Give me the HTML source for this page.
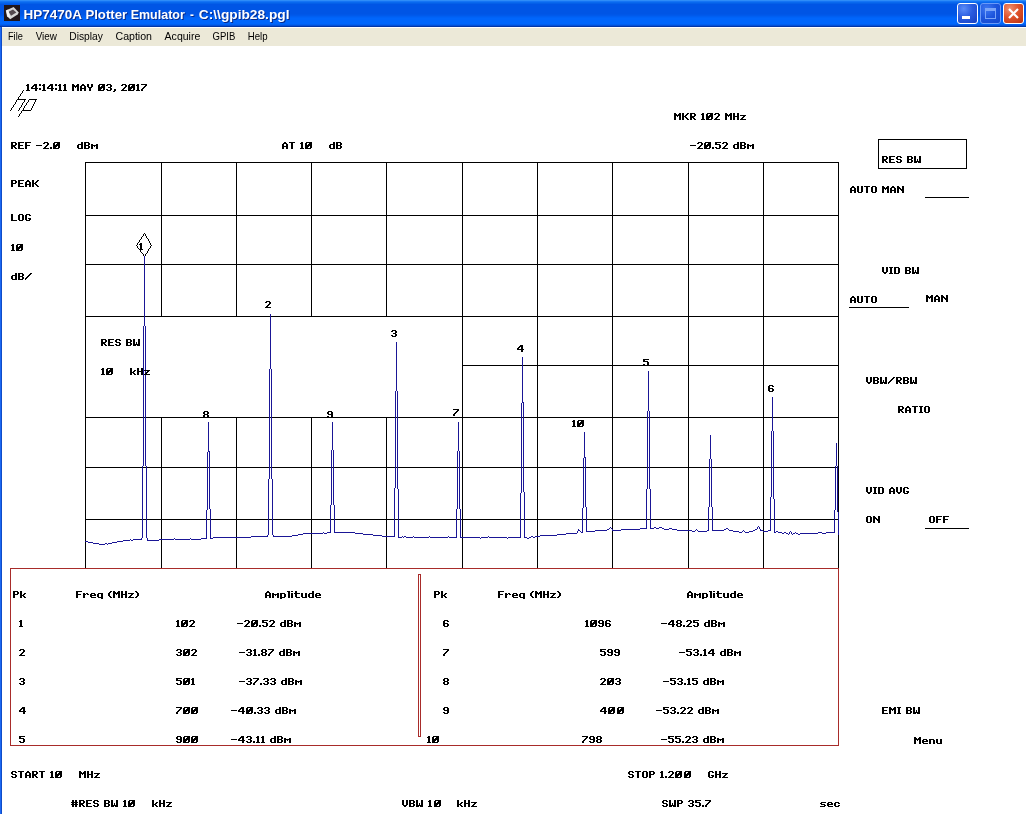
<!DOCTYPE html>
<html><head><meta charset="utf-8"><title>HP7470A Plotter Emulator</title>
<style>
html,body{margin:0;padding:0;background:#fff;overflow:hidden}
body{width:1026px;height:814px;position:relative;font-family:"Liberation Sans",sans-serif}
#tb{position:absolute;left:0;top:0;width:1026px;height:27px;
background:linear-gradient(to bottom,#2e8cf8 0.5px,#1474f4 1.5px,#0868ee 2.5px,#045fe8 3.5px,#0055e5 4.5px,#0055e5 13.5px,#0057e8 14.5px,#005aec 15.5px,#005ff2 16.5px,#0063f8 17.5px,#0066fc 18.5px,#0066fc 23.5px,#0060f0 24.5px,#0450d8 25.5px,#0238a8 26.5px)}
#lb{position:absolute;left:0;top:27px;width:2px;height:787px;background:linear-gradient(to right,#1c68f2 0,#1c68f2 1px,#0f4cc8 1px,#0f4cc8 2px)}
#mb{position:absolute;left:2px;top:27px;width:1024px;height:19px;background:#ece9d8;border-top:1px solid #fff;box-sizing:border-box}
#ttl{position:absolute;left:0;top:0}
.btn{position:absolute;top:3px;width:21px;height:21px;box-sizing:border-box;border:1px solid #fff;border-radius:3px}
</style></head><body>
<div id="tb"></div><div id="lb"></div><div id="mb"></div>
<div class="btn" style="left:957px;background:radial-gradient(circle at 30% 25%,#5a8cf8 0,#2a5ce0 45%,#1840c0 100%)"></div>
<div class="btn" style="left:980px;border-color:#6a9af8;background:radial-gradient(circle at 30% 25%,#3e78f2 0,#1c54dc 50%,#1448cc 100%)"></div>
<div class="btn" style="left:1003px;background:radial-gradient(circle at 30% 25%,#f09070 0,#e0542c 45%,#b83010 100%)"></div>
<svg width="1026" height="48" viewBox="0 0 1026 48" style="position:absolute;left:0;top:0;will-change:transform">
<style>
.tt{font-family:"Liberation Sans",sans-serif;font-weight:bold;font-size:13.5px;fill:#fff}
.ts{font-family:"Liberation Sans",sans-serif;font-weight:bold;font-size:13.5px;fill:#0a2a88}
.mn{font-family:"Liberation Sans",sans-serif;font-size:11px;fill:#000}
</style>
<!-- app icon -->
<rect x="4" y="5" width="16" height="16" fill="#21161a"/>
<path d="M13.6,7 L18.8,12.4 L17.6,14.6 L10.2,19.2 L7,16.2 L5.8,10.4 Z" fill="#d6d6d6"/>
<path d="M13,9.4 L16.4,12.6 L11,15.8 L8.6,11.8 Z" fill="#54494e"/>
<path d="M6.2,10.6 L8.2,9.6 L9.6,15.6 L10.4,18.6 L7.4,16 Z" fill="#f4f4f4"/>
<text class="ts" x="24.4" y="19.7" textLength="58.5" lengthAdjust="spacingAndGlyphs">HP7470A</text>
<text class="tt" x="23.4" y="18.7" textLength="58.5" lengthAdjust="spacingAndGlyphs">HP7470A</text>
<text class="ts" x="86.4" y="19.7" textLength="41.8" lengthAdjust="spacingAndGlyphs">Plotter</text>
<text class="tt" x="85.4" y="18.7" textLength="41.8" lengthAdjust="spacingAndGlyphs">Plotter</text>
<text class="ts" x="131.7" y="19.7" textLength="54.1" lengthAdjust="spacingAndGlyphs">Emulator</text>
<text class="tt" x="130.7" y="18.7" textLength="54.1" lengthAdjust="spacingAndGlyphs">Emulator</text>
<text class="ts" x="191.0" y="19.7" textLength="3.9" lengthAdjust="spacingAndGlyphs">-</text>
<text class="tt" x="190.0" y="18.7" textLength="3.9" lengthAdjust="spacingAndGlyphs">-</text>
<text class="ts" x="199.8" y="19.7" textLength="90.7" lengthAdjust="spacingAndGlyphs">C:\\gpib28.pgl</text>
<text class="tt" x="198.8" y="18.7" textLength="90.7" lengthAdjust="spacingAndGlyphs">C:\\gpib28.pgl</text>
<text class="mn" x="8.0" y="40" textLength="14.8" lengthAdjust="spacingAndGlyphs">File</text>
<text class="mn" x="35.7" y="40" textLength="21.3" lengthAdjust="spacingAndGlyphs">View</text>
<text class="mn" x="69.3" y="40" textLength="33.6" lengthAdjust="spacingAndGlyphs">Display</text>
<text class="mn" x="115.5" y="40" textLength="36.5" lengthAdjust="spacingAndGlyphs">Caption</text>
<text class="mn" x="164.6" y="40" textLength="35.7" lengthAdjust="spacingAndGlyphs">Acquire</text>
<text class="mn" x="212.6" y="40" textLength="22.8" lengthAdjust="spacingAndGlyphs">GPIB</text>
<text class="mn" x="247.7" y="40" textLength="19.8" lengthAdjust="spacingAndGlyphs">Help</text>
<!-- window button glyphs -->
<rect x="962" y="16" width="8" height="3" fill="#fff"/>
<rect x="985.5" y="8.5" width="10" height="10" fill="none" stroke="#7aa4f8" stroke-width="1"/>
<rect x="985" y="8" width="11" height="3" fill="#7aa4f8"/>
<path d="M1009,9 L1018,18 M1018,9 L1009,18" stroke="#fff" stroke-width="2.2" fill="none"/>
</svg>
<svg id="plot" width="1026" height="814" viewBox="0 0 1026 814" style="position:absolute;left:0;top:0">
<style>
.k{fill:#000}
.r{fill:#a82c2a}
.tb{fill:#1a1696}
.ln{fill:none;stroke:#000;stroke-width:1}
#plot text{font-family:"Liberation Sans",sans-serif;font-weight:bold;font-size:10px;fill:#000}
</style>
<defs>
<path id="g23" d="M1 0h2v1h-2zM4 0h2v1h-2zM1 1h2v1h-2zM4 1h2v1h-2zM0 2h7v1h-7zM1 3h2v1h-2zM4 3h2v1h-2zM0 4h7v1h-7zM1 5h2v1h-2zM4 5h2v1h-2zM1 6h2v1h-2zM4 6h2v1h-2z"/>
<path id="g28" d="M2 0h2v1h-2zM1 1h2v1h-2zM0 2h2v1h-2zM0 3h2v1h-2zM0 4h2v1h-2zM1 5h2v1h-2zM2 6h2v1h-2z"/>
<path id="g29" d="M0 0h2v1h-2zM1 1h2v1h-2zM2 2h2v1h-2zM2 3h2v1h-2zM2 4h2v1h-2zM1 5h2v1h-2zM0 6h2v1h-2z"/>
<path id="g2c" d="M1 5h2v1h-2zM1 6h2v1h-2zM0 7h2v1h-2z"/>
<path id="g2e" d="M0 5h2v1h-2zM0 6h2v1h-2z"/>
<path id="g2f" d="M5 0h2v1h-2zM4 1h2v1h-2zM3 2h2v1h-2zM2 3h2v1h-2zM1 4h2v1h-2zM0 5h2v1h-2zM0 6h1v1h-1z"/>
<path id="g30" d="M1 0h6v1h-6zM0 1h2v1h-2zM4 1h3v1h-3zM0 2h2v1h-2zM3 2h4v1h-4zM0 3h7v1h-7zM0 4h4v1h-4zM5 4h2v1h-2zM0 5h3v1h-3zM5 5h2v1h-2zM0 6h6v1h-6z"/>
<path id="g31" d="M1 0h2v1h-2zM0 1h3v1h-3zM1 2h2v1h-2zM1 3h2v1h-2zM1 4h2v1h-2zM1 5h2v1h-2zM0 6h4v1h-4z"/>
<path id="g32" d="M1 0h4v1h-4zM0 1h2v1h-2zM4 1h2v1h-2zM4 2h2v1h-2zM3 3h2v1h-2zM2 4h2v1h-2zM1 5h2v1h-2zM0 6h6v1h-6z"/>
<path id="g33" d="M1 0h4v1h-4zM0 1h2v1h-2zM4 1h2v1h-2zM4 2h2v1h-2zM2 3h3v1h-3zM4 4h2v1h-2zM0 5h2v1h-2zM4 5h2v1h-2zM1 6h4v1h-4z"/>
<path id="g34" d="M3 0h3v1h-3zM2 1h4v1h-4zM1 2h2v1h-2zM4 2h2v1h-2zM0 3h2v1h-2zM4 3h2v1h-2zM0 4h7v1h-7zM4 5h2v1h-2zM4 6h2v1h-2z"/>
<path id="g35" d="M0 0h6v1h-6zM0 1h2v1h-2zM0 2h5v1h-5zM4 3h2v1h-2zM4 4h2v1h-2zM0 5h2v1h-2zM4 5h2v1h-2zM1 6h4v1h-4z"/>
<path id="g36" d="M1 0h4v1h-4zM0 1h2v1h-2zM4 1h2v1h-2zM0 2h2v1h-2zM0 3h5v1h-5zM0 4h2v1h-2zM4 4h2v1h-2zM0 5h2v1h-2zM4 5h2v1h-2zM1 6h4v1h-4z"/>
<path id="g37" d="M0 0h6v1h-6zM4 1h2v1h-2zM3 2h2v1h-2zM2 3h2v1h-2zM1 4h2v1h-2zM0 5h2v1h-2zM0 6h2v1h-2z"/>
<path id="g38" d="M1 0h4v1h-4zM0 1h2v1h-2zM4 1h2v1h-2zM0 2h2v1h-2zM4 2h2v1h-2zM1 3h4v1h-4zM0 4h2v1h-2zM4 4h2v1h-2zM0 5h2v1h-2zM4 5h2v1h-2zM1 6h4v1h-4z"/>
<path id="g39" d="M1 0h4v1h-4zM0 1h2v1h-2zM4 1h2v1h-2zM0 2h2v1h-2zM4 2h2v1h-2zM1 3h5v1h-5zM4 4h2v1h-2zM0 5h2v1h-2zM4 5h2v1h-2zM1 6h4v1h-4z"/>
<path id="g3a" d="M0 0h2v1h-2zM0 1h2v1h-2zM0 4h2v1h-2zM0 5h2v1h-2z"/>
<path id="g41" d="M2 0h2v1h-2zM1 1h4v1h-4zM0 2h2v1h-2zM4 2h2v1h-2zM0 3h2v1h-2zM4 3h2v1h-2zM0 4h6v1h-6zM0 5h2v1h-2zM4 5h2v1h-2zM0 6h2v1h-2zM4 6h2v1h-2z"/>
<path id="g42" d="M0 0h5v1h-5zM0 1h2v1h-2zM4 1h2v1h-2zM0 2h2v1h-2zM4 2h2v1h-2zM0 3h5v1h-5zM0 4h2v1h-2zM4 4h2v1h-2zM0 5h2v1h-2zM4 5h2v1h-2zM0 6h5v1h-5z"/>
<path id="g44" d="M0 0h5v1h-5zM0 1h2v1h-2zM4 1h2v1h-2zM0 2h2v1h-2zM4 2h2v1h-2zM0 3h2v1h-2zM4 3h2v1h-2zM0 4h2v1h-2zM4 4h2v1h-2zM0 5h2v1h-2zM4 5h2v1h-2zM0 6h5v1h-5z"/>
<path id="g45" d="M0 0h6v1h-6zM0 1h2v1h-2zM0 2h2v1h-2zM0 3h5v1h-5zM0 4h2v1h-2zM0 5h2v1h-2zM0 6h6v1h-6z"/>
<path id="g46" d="M0 0h6v1h-6zM0 1h2v1h-2zM0 2h2v1h-2zM0 3h5v1h-5zM0 4h2v1h-2zM0 5h2v1h-2zM0 6h2v1h-2z"/>
<path id="g47" d="M1 0h4v1h-4zM0 1h2v1h-2zM4 1h2v1h-2zM0 2h2v1h-2zM0 3h2v1h-2zM0 4h2v1h-2zM3 4h3v1h-3zM0 5h2v1h-2zM4 5h2v1h-2zM1 6h4v1h-4z"/>
<path id="g48" d="M0 0h2v1h-2zM4 0h2v1h-2zM0 1h2v1h-2zM4 1h2v1h-2zM0 2h2v1h-2zM4 2h2v1h-2zM0 3h6v1h-6zM0 4h2v1h-2zM4 4h2v1h-2zM0 5h2v1h-2zM4 5h2v1h-2zM0 6h2v1h-2zM4 6h2v1h-2z"/>
<path id="g49" d="M0 0h4v1h-4zM1 1h2v1h-2zM1 2h2v1h-2zM1 3h2v1h-2zM1 4h2v1h-2zM1 5h2v1h-2zM0 6h4v1h-4z"/>
<path id="g4b" d="M0 0h2v1h-2zM5 0h2v1h-2zM0 1h2v1h-2zM4 1h2v1h-2zM0 2h2v1h-2zM3 2h2v1h-2zM0 3h4v1h-4zM0 4h2v1h-2zM3 4h2v1h-2zM0 5h2v1h-2zM4 5h2v1h-2zM0 6h2v1h-2zM5 6h2v1h-2z"/>
<path id="g4c" d="M0 0h2v1h-2zM0 1h2v1h-2zM0 2h2v1h-2zM0 3h2v1h-2zM0 4h2v1h-2zM0 5h2v1h-2zM0 6h6v1h-6z"/>
<path id="g4d" d="M0 0h2v1h-2zM5 0h2v1h-2zM0 1h3v1h-3zM4 1h3v1h-3zM0 2h7v1h-7zM0 3h2v1h-2zM3 3h1v1h-1zM5 3h2v1h-2zM0 4h2v1h-2zM5 4h2v1h-2zM0 5h2v1h-2zM5 5h2v1h-2zM0 6h2v1h-2zM5 6h2v1h-2z"/>
<path id="g4e" d="M0 0h2v1h-2zM5 0h2v1h-2zM0 1h3v1h-3zM5 1h2v1h-2zM0 2h4v1h-4zM5 2h2v1h-2zM0 3h2v1h-2zM3 3h4v1h-4zM0 4h2v1h-2zM4 4h3v1h-3zM0 5h2v1h-2zM5 5h2v1h-2zM0 6h2v1h-2zM5 6h2v1h-2z"/>
<path id="g4f" d="M1 0h4v1h-4zM0 1h2v1h-2zM4 1h2v1h-2zM0 2h2v1h-2zM4 2h2v1h-2zM0 3h2v1h-2zM4 3h2v1h-2zM0 4h2v1h-2zM4 4h2v1h-2zM0 5h2v1h-2zM4 5h2v1h-2zM1 6h4v1h-4z"/>
<path id="g50" d="M0 0h5v1h-5zM0 1h2v1h-2zM4 1h2v1h-2zM0 2h2v1h-2zM4 2h2v1h-2zM0 3h5v1h-5zM0 4h2v1h-2zM0 5h2v1h-2zM0 6h2v1h-2z"/>
<path id="g52" d="M0 0h5v1h-5zM0 1h2v1h-2zM4 1h2v1h-2zM0 2h2v1h-2zM4 2h2v1h-2zM0 3h5v1h-5zM0 4h4v1h-4zM0 5h2v1h-2zM3 5h2v1h-2zM0 6h2v1h-2zM4 6h2v1h-2z"/>
<path id="g53" d="M1 0h4v1h-4zM0 1h2v1h-2zM4 1h2v1h-2zM0 2h2v1h-2zM1 3h4v1h-4zM4 4h2v1h-2zM0 5h2v1h-2zM4 5h2v1h-2zM1 6h4v1h-4z"/>
<path id="g54" d="M0 0h6v1h-6zM2 1h2v1h-2zM2 2h2v1h-2zM2 3h2v1h-2zM2 4h2v1h-2zM2 5h2v1h-2zM2 6h2v1h-2z"/>
<path id="g55" d="M0 0h2v1h-2zM4 0h2v1h-2zM0 1h2v1h-2zM4 1h2v1h-2zM0 2h2v1h-2zM4 2h2v1h-2zM0 3h2v1h-2zM4 3h2v1h-2zM0 4h2v1h-2zM4 4h2v1h-2zM0 5h2v1h-2zM4 5h2v1h-2zM1 6h4v1h-4z"/>
<path id="g56" d="M0 0h2v1h-2zM4 0h2v1h-2zM0 1h2v1h-2zM4 1h2v1h-2zM0 2h2v1h-2zM4 2h2v1h-2zM0 3h2v1h-2zM4 3h2v1h-2zM0 4h2v1h-2zM4 4h2v1h-2zM1 5h4v1h-4zM2 6h2v1h-2z"/>
<path id="g57" d="M0 0h2v1h-2zM5 0h2v1h-2zM0 1h2v1h-2zM5 1h2v1h-2zM0 2h2v1h-2zM5 2h2v1h-2zM0 3h2v1h-2zM3 3h1v1h-1zM5 3h2v1h-2zM0 4h2v1h-2zM3 4h1v1h-1zM5 4h2v1h-2zM0 5h7v1h-7zM0 6h3v1h-3zM4 6h3v1h-3z"/>
<path id="g59" d="M0 0h2v1h-2zM4 0h2v1h-2zM0 1h2v1h-2zM4 1h2v1h-2zM0 2h2v1h-2zM4 2h2v1h-2zM1 3h4v1h-4zM2 4h2v1h-2zM2 5h2v1h-2zM2 6h2v1h-2z"/>
<path id="g63" d="M1 2h4v1h-4zM0 3h2v1h-2zM4 3h2v1h-2zM0 4h2v1h-2zM0 5h2v1h-2zM4 5h2v1h-2zM1 6h4v1h-4z"/>
<path id="g64" d="M4 0h2v1h-2zM4 1h2v1h-2zM1 2h5v1h-5zM0 3h2v1h-2zM4 3h2v1h-2zM0 4h2v1h-2zM4 4h2v1h-2zM0 5h2v1h-2zM4 5h2v1h-2zM1 6h5v1h-5z"/>
<path id="g65" d="M1 2h4v1h-4zM0 3h2v1h-2zM4 3h2v1h-2zM0 4h6v1h-6zM0 5h2v1h-2zM1 6h5v1h-5z"/>
<path id="g69" d="M0 0h2v1h-2zM0 2h2v1h-2zM0 3h2v1h-2zM0 4h2v1h-2zM0 5h2v1h-2zM0 6h2v1h-2z"/>
<path id="g6b" d="M0 0h2v1h-2zM0 1h2v1h-2zM0 2h2v1h-2zM4 2h2v1h-2zM0 3h2v1h-2zM3 3h2v1h-2zM0 4h4v1h-4zM0 5h2v1h-2zM3 5h2v1h-2zM0 6h2v1h-2zM4 6h2v1h-2z"/>
<path id="g6c" d="M0 0h3v1h-3zM1 1h2v1h-2zM1 2h2v1h-2zM1 3h2v1h-2zM1 4h2v1h-2zM1 5h2v1h-2zM1 6h2v1h-2z"/>
<path id="g6d" d="M0 2h2v1h-2zM5 2h2v1h-2zM0 3h7v1h-7zM0 4h2v1h-2zM3 4h1v1h-1zM5 4h2v1h-2zM0 5h2v1h-2zM5 5h2v1h-2zM0 6h2v1h-2zM5 6h2v1h-2z"/>
<path id="g6e" d="M0 2h5v1h-5zM0 3h2v1h-2zM4 3h2v1h-2zM0 4h2v1h-2zM4 4h2v1h-2zM0 5h2v1h-2zM4 5h2v1h-2zM0 6h2v1h-2zM4 6h2v1h-2z"/>
<path id="g70" d="M0 2h5v1h-5zM0 3h2v1h-2zM4 3h2v1h-2zM0 4h2v1h-2zM4 4h2v1h-2zM0 5h2v1h-2zM4 5h2v1h-2zM0 6h5v1h-5zM0 7h2v1h-2z"/>
<path id="g71" d="M1 2h5v1h-5zM0 3h2v1h-2zM4 3h2v1h-2zM0 4h2v1h-2zM4 4h2v1h-2zM0 5h2v1h-2zM4 5h2v1h-2zM1 6h5v1h-5zM4 7h2v1h-2z"/>
<path id="g72" d="M0 2h2v1h-2zM3 2h2v1h-2zM0 3h3v1h-3zM4 3h2v1h-2zM0 4h2v1h-2zM0 5h2v1h-2zM0 6h2v1h-2z"/>
<path id="g73" d="M1 2h5v1h-5zM0 3h2v1h-2zM1 4h4v1h-4zM4 5h2v1h-2zM0 6h5v1h-5z"/>
<path id="g74" d="M1 0h2v1h-2zM1 1h2v1h-2zM0 2h6v1h-6zM1 3h2v1h-2zM1 4h2v1h-2zM1 5h2v1h-2zM2 6h4v1h-4z"/>
<path id="g75" d="M0 2h2v1h-2zM4 2h2v1h-2zM0 3h2v1h-2zM4 3h2v1h-2zM0 4h2v1h-2zM4 4h2v1h-2zM0 5h2v1h-2zM4 5h2v1h-2zM1 6h5v1h-5z"/>
<path id="g7a" d="M0 2h6v1h-6zM3 3h2v1h-2zM2 4h2v1h-2zM1 5h2v1h-2zM0 6h6v1h-6z"/>
<path id="g2212" d="M0 3h6v1h-6z"/>
</defs>
<g shape-rendering="crispEdges">
<rect class="k" x="85" y="162" width="754" height="1"/>
<rect class="k" x="85" y="215" width="754" height="1"/>
<rect class="k" x="85" y="264" width="754" height="1"/>
<rect class="k" x="85" y="316" width="754" height="1"/>
<rect class="k" x="462" y="365" width="377" height="1"/>
<rect class="k" x="85" y="417" width="754" height="1"/>
<rect class="k" x="85" y="467" width="754" height="1"/>
<rect class="k" x="85" y="519" width="754" height="1"/>
<rect class="k" x="85" y="162" width="1" height="407"/>
<rect class="k" x="161" y="162" width="1" height="155"/>
<rect class="k" x="161" y="417" width="1" height="152"/>
<rect class="k" x="236" y="162" width="1" height="155"/>
<rect class="k" x="236" y="417" width="1" height="152"/>
<rect class="k" x="311" y="162" width="1" height="155"/>
<rect class="k" x="311" y="417" width="1" height="152"/>
<rect class="k" x="386" y="162" width="1" height="155"/>
<rect class="k" x="386" y="417" width="1" height="152"/>
<rect class="k" x="462" y="162" width="1" height="407"/>
<rect class="k" x="537" y="162" width="1" height="407"/>
<rect class="k" x="612" y="162" width="1" height="407"/>
<rect class="k" x="688" y="162" width="1" height="407"/>
<rect class="k" x="763" y="162" width="1" height="407"/>
<rect class="k" x="838" y="162" width="1" height="407"/>
<rect class="r" x="10" y="568" width="829" height="1"/>
<rect class="r" x="10" y="745" width="829" height="1"/>
<rect class="r" x="10" y="568" width="1" height="178"/>
<rect class="r" x="838" y="568" width="1" height="178"/>
<rect class="r" x="418" y="574" width="1" height="163"/>
<rect class="r" x="420" y="574" width="1" height="163"/>
<rect class="r" x="418" y="574" width="3" height="1"/>
<rect class="r" x="418" y="736" width="3" height="1"/>
<rect class="k" x="878" y="139" width="89" height="1"/>
<rect class="k" x="878" y="168" width="89" height="1"/>
<rect class="k" x="878" y="139" width="1" height="30"/>
<rect class="k" x="966" y="139" width="1" height="30"/>
<rect class="k" x="925" y="197" width="44" height="1"/>
<rect class="k" x="849" y="307" width="60" height="1"/>
<rect class="k" x="925" y="528" width="44" height="1"/>
</g>
<path class="k" shape-rendering="crispEdges" d="M10 110h1v1h-1zM11 108h1v2h-1zM12 107h1v1h-1zM13 105h1v2h-1zM14 104h1v1h-1zM15 102h1v2h-1zM16 100h1v2h-1zM17 99h9v1h-9zM18 97h1v2h-1zM18 110h1v1h-1zM18 116h1v1h-1zM19 96h1v1h-1zM19 108h1v2h-1zM19 114h1v2h-1zM20 94h1v2h-1zM20 107h1v1h-1zM20 113h1v1h-1zM21 93h1v1h-1zM21 105h1v2h-1zM21 111h1v2h-1zM22 91h1v2h-1zM22 103h1v2h-1zM22 110h9v1h-9zM23 90h1v1h-1zM23 102h1v1h-1zM23 108h1v2h-1zM24 100h1v2h-1zM24 106h1v2h-1zM25 105h1v1h-1zM26 103h1v2h-1zM27 102h1v1h-1zM28 100h1v2h-1zM29 99h8v1h-8zM31 108h1v2h-1zM32 106h1v2h-1zM33 104h1v2h-1zM34 102h1v2h-1zM35 100h1v2h-1z"/>
<path d="M144.5,233 L152,245.5 L144.5,257 L136,245.5 Z" fill="#fff"/>
<path class="k" shape-rendering="crispEdges" d="M136 245h1v1h-1zM137 243h1v2h-1zM137 246h1v2h-1zM138 242h1v1h-1zM138 248h1v1h-1zM139 240h1v2h-1zM139 249h1v1h-1zM140 239h1v1h-1zM140 250h1v2h-1zM141 237h1v2h-1zM141 252h1v1h-1zM142 236h1v1h-1zM142 253h1v1h-1zM143 234h1v2h-1zM143 254h1v2h-1zM144 233h1v1h-1zM144 256h1v1h-1zM145 234h1v2h-1zM145 254h1v2h-1zM146 236h1v2h-1zM146 253h1v1h-1zM147 238h1v1h-1zM147 251h1v2h-1zM148 239h1v2h-1zM148 249h1v2h-1zM149 241h1v2h-1zM149 248h1v1h-1zM150 243h1v2h-1zM150 246h1v2h-1zM151 245h1v1h-1z"/>
<path class="tb" shape-rendering="crispEdges" d="M85 541h3v1h-3zM88 542h5v1h-5zM93 543h6v1h-6zM99 544h6v1h-6zM105 543h2v1h-2zM107 544h1v1h-1zM108 543h4v1h-4zM112 542h5v1h-5zM117 541h6v1h-6zM123 540h7v1h-7zM130 539h1v1h-1zM131 540h2v1h-2zM133 539h9v1h-9zM141 538h1v1h-1zM142 466h1v72h-1zM143 326h1v140h-1zM144 256h1v70h-1zM145 326h1v140h-1zM146 466h1v72h-1zM147 538h1v2h-1zM147 540h12v1h-12zM159 539h15v1h-15zM174 538h1v1h-1zM175 539h15v1h-15zM190 538h1v1h-1zM191 539h10v1h-10zM201 538h6v1h-6zM206 510h1v28h-1zM207 452h1v58h-1zM208 422h1v29h-1zM208 451h2v1h-2zM209 452h1v57h-1zM210 509h1v29h-1zM210 538h3v1h-3zM213 537h38v1h-38zM251 536h17v1h-17zM267 535h1v1h-1zM268 479h1v56h-1zM269 369h1v110h-1zM270 314h1v55h-1zM271 369h1v110h-1zM272 479h1v56h-1zM273 535h1v1h-1zM273 536h19v1h-19zM292 535h6v1h-6zM298 534h5v1h-5zM303 533h20v1h-20zM323 532h1v1h-1zM324 533h3v1h-3zM327 532h4v1h-4zM330 505h1v27h-1zM331 450h1v55h-1zM332 422h1v28h-1zM333 450h1v55h-1zM334 505h1v27h-1zM334 532h21v1h-21zM355 533h8v1h-8zM363 534h10v1h-10zM373 535h9v1h-9zM382 536h13v1h-13zM394 488h1v48h-1zM395 391h1v97h-1zM396 342h1v49h-1zM397 391h1v98h-1zM398 489h1v48h-1zM398 537h4v1h-4zM402 536h1v1h-1zM403 537h1v1h-1zM404 536h2v1h-2zM406 537h7v1h-7zM413 536h1v1h-1zM414 537h15v1h-15zM429 536h1v1h-1zM430 537h18v1h-18zM448 536h1v1h-1zM449 537h8v1h-8zM456 509h1v28h-1zM457 451h1v58h-1zM458 422h1v29h-1zM459 451h1v58h-1zM460 509h1v28h-1zM460 537h20v1h-20zM480 538h1v1h-1zM481 537h7v1h-7zM488 536h1v1h-1zM489 537h18v1h-18zM507 538h1v1h-1zM508 537h13v1h-13zM520 493h1v44h-1zM521 403h1v90h-1zM522 357h1v45h-1zM522 402h2v1h-2zM523 403h1v89h-1zM524 492h1v45h-1zM524 537h3v1h-3zM527 538h2v1h-2zM529 537h2v1h-2zM531 536h2v1h-2zM533 537h2v1h-2zM535 536h5v1h-5zM540 535h17v1h-17zM557 534h9v1h-9zM566 533h11v1h-11zM577 531h1v2h-1zM578 529h1v1h-1zM578 530h2v1h-2zM580 531h1v1h-1zM581 532h2v1h-2zM582 508h1v24h-1zM583 458h1v50h-1zM584 432h1v25h-1zM584 457h2v1h-2zM585 458h1v49h-1zM586 507h1v24h-1zM586 531h9v1h-9zM595 530h12v1h-12zM607 529h2v1h-2zM609 528h1v1h-1zM610 527h1v1h-1zM611 528h1v1h-1zM612 529h1v1h-1zM612 530h9v1h-9zM621 529h19v1h-19zM640 528h7v1h-7zM646 489h1v39h-1zM647 411h1v78h-1zM648 371h1v40h-1zM649 411h1v78h-1zM650 489h1v39h-1zM650 528h4v1h-4zM654 527h2v1h-2zM656 528h3v1h-3zM659 527h3v1h-3zM662 528h2v1h-2zM664 529h5v1h-5zM669 528h3v1h-3zM672 529h5v1h-5zM677 530h15v1h-15zM692 531h3v1h-3zM695 530h1v1h-1zM696 529h1v1h-1zM697 530h1v1h-1zM698 531h9v1h-9zM707 530h2v1h-2zM708 507h1v23h-1zM709 459h1v48h-1zM710 435h1v24h-1zM711 459h1v48h-1zM712 507h1v23h-1zM712 530h12v1h-12zM724 529h2v1h-2zM726 528h2v1h-2zM728 529h1v1h-1zM729 530h4v1h-4zM733 531h6v1h-6zM739 532h3v1h-3zM742 531h1v1h-1zM743 530h1v1h-1zM744 531h1v1h-1zM745 532h4v1h-4zM749 531h4v1h-4zM753 530h2v1h-2zM755 529h2v1h-2zM757 527h1v2h-1zM758 526h1v1h-1zM759 527h1v2h-1zM760 529h1v1h-1zM760 530h3v1h-3zM763 531h5v1h-5zM768 530h3v1h-3zM770 497h1v33h-1zM771 431h1v66h-1zM772 397h1v34h-1zM773 431h1v68h-1zM774 499h1v33h-1zM774 532h2v1h-2zM776 531h2v1h-2zM778 532h4v1h-4zM782 533h2v1h-2zM784 532h2v1h-2zM786 533h2v1h-2zM788 534h1v1h-1zM789 532h1v2h-1zM790 531h1v1h-1zM791 532h1v2h-1zM792 534h1v1h-1zM793 533h2v1h-2zM795 532h1v1h-1zM796 533h2v1h-2zM798 534h2v1h-2zM800 533h18v1h-18zM818 532h4v1h-4zM822 533h4v1h-4zM826 532h9v1h-9zM834 510h1v22h-1zM835 466h1v44h-1zM836 443h1v23h-1zM837 466h1v46h-1zM838 512h1v23h-1z"/>
<g shape-rendering="crispEdges" fill="#000">
<use href="#g31" x="26" y="84"/>
<use href="#g34" x="31" y="84"/>
<use href="#g3a" x="39" y="84"/>
<use href="#g31" x="42" y="84"/>
<use href="#g34" x="47" y="84"/>
<use href="#g3a" x="55" y="84"/>
<use href="#g31" x="58" y="84"/>
<use href="#g31" x="63" y="84"/>
<use href="#g4d" x="72" y="84"/>
<use href="#g41" x="80" y="84"/>
<use href="#g59" x="87" y="84"/>
<use href="#g30" x="98" y="84"/>
<use href="#g33" x="106" y="84"/>
<use href="#g2c" x="113" y="84"/>
<use href="#g32" x="121" y="84"/>
<use href="#g30" x="128" y="84"/>
<use href="#g31" x="136" y="84"/>
<use href="#g37" x="141" y="84"/>
<use href="#g52" x="11" y="142"/>
<use href="#g45" x="18" y="142"/>
<use href="#g46" x="25" y="142"/>
<use href="#g2212" x="36" y="142"/>
<use href="#g32" x="43" y="142"/>
<use href="#g2e" x="50" y="142"/>
<use href="#g30" x="53" y="142"/>
<use href="#g64" x="77" y="142"/>
<use href="#g42" x="84" y="142"/>
<use href="#g6d" x="91" y="142"/>
<use href="#g41" x="282" y="142"/>
<use href="#g54" x="289" y="142"/>
<use href="#g31" x="300" y="142"/>
<use href="#g30" x="305" y="142"/>
<use href="#g64" x="329" y="142"/>
<use href="#g42" x="336" y="142"/>
<use href="#g4d" x="674" y="113"/>
<use href="#g4b" x="682" y="113"/>
<use href="#g52" x="690" y="113"/>
<use href="#g31" x="701" y="113"/>
<use href="#g30" x="706" y="113"/>
<use href="#g32" x="714" y="113"/>
<use href="#g4d" x="725" y="113"/>
<use href="#g48" x="733" y="113"/>
<use href="#g7a" x="740" y="113"/>
<use href="#g2212" x="690" y="142"/>
<use href="#g32" x="697" y="142"/>
<use href="#g30" x="704" y="142"/>
<use href="#g2e" x="712" y="142"/>
<use href="#g35" x="715" y="142"/>
<use href="#g32" x="722" y="142"/>
<use href="#g64" x="733" y="142"/>
<use href="#g42" x="740" y="142"/>
<use href="#g6d" x="747" y="142"/>
<use href="#g50" x="11" y="180"/>
<use href="#g45" x="18" y="180"/>
<use href="#g41" x="25" y="180"/>
<use href="#g4b" x="32" y="180"/>
<use href="#g4c" x="11" y="214"/>
<use href="#g4f" x="18" y="214"/>
<use href="#g47" x="25" y="214"/>
<use href="#g31" x="11" y="244"/>
<use href="#g30" x="16" y="244"/>
<use href="#g64" x="11" y="273"/>
<use href="#g42" x="18" y="273"/>
<use href="#g2f" x="25" y="273"/>
<use href="#g52" x="101" y="339"/>
<use href="#g45" x="108" y="339"/>
<use href="#g53" x="115" y="339"/>
<use href="#g42" x="126" y="339"/>
<use href="#g57" x="133" y="339"/>
<use href="#g31" x="101" y="368"/>
<use href="#g30" x="106" y="368"/>
<use href="#g6b" x="130" y="368"/>
<use href="#g48" x="137" y="368"/>
<use href="#g7a" x="144" y="368"/>
<use href="#g31" x="139" y="243"/>
<use href="#g32" x="265" y="301"/>
<use href="#g33" x="391" y="330"/>
<use href="#g34" x="517" y="345"/>
<use href="#g35" x="643" y="359"/>
<use href="#g36" x="768" y="385"/>
<use href="#g37" x="453" y="409"/>
<use href="#g38" x="203" y="411"/>
<use href="#g39" x="327" y="411"/>
<use href="#g31" x="572" y="420"/>
<use href="#g30" x="577" y="420"/>
<use href="#g52" x="882" y="156"/>
<use href="#g45" x="889" y="156"/>
<use href="#g53" x="896" y="156"/>
<use href="#g42" x="907" y="156"/>
<use href="#g57" x="914" y="156"/>
<use href="#g41" x="850" y="186"/>
<use href="#g55" x="857" y="186"/>
<use href="#g54" x="864" y="186"/>
<use href="#g4f" x="871" y="186"/>
<use href="#g4d" x="882" y="186"/>
<use href="#g41" x="890" y="186"/>
<use href="#g4e" x="897" y="186"/>
<use href="#g56" x="882" y="267"/>
<use href="#g49" x="889" y="267"/>
<use href="#g44" x="894" y="267"/>
<use href="#g42" x="905" y="267"/>
<use href="#g57" x="912" y="267"/>
<use href="#g41" x="850" y="296"/>
<use href="#g55" x="857" y="296"/>
<use href="#g54" x="864" y="296"/>
<use href="#g4f" x="871" y="296"/>
<use href="#g4d" x="926" y="295"/>
<use href="#g41" x="934" y="295"/>
<use href="#g4e" x="941" y="295"/>
<use href="#g56" x="866" y="377"/>
<use href="#g42" x="873" y="377"/>
<use href="#g57" x="880" y="377"/>
<use href="#g2f" x="888" y="377"/>
<use href="#g52" x="896" y="377"/>
<use href="#g42" x="903" y="377"/>
<use href="#g57" x="910" y="377"/>
<use href="#g52" x="898" y="406"/>
<use href="#g41" x="905" y="406"/>
<use href="#g54" x="912" y="406"/>
<use href="#g49" x="919" y="406"/>
<use href="#g4f" x="924" y="406"/>
<use href="#g56" x="866" y="487"/>
<use href="#g49" x="873" y="487"/>
<use href="#g44" x="878" y="487"/>
<use href="#g41" x="889" y="487"/>
<use href="#g56" x="896" y="487"/>
<use href="#g47" x="903" y="487"/>
<use href="#g4f" x="866" y="516"/>
<use href="#g4e" x="873" y="516"/>
<use href="#g4f" x="929" y="516"/>
<use href="#g46" x="936" y="516"/>
<use href="#g46" x="943" y="516"/>
<use href="#g45" x="882" y="707"/>
<use href="#g4d" x="889" y="707"/>
<use href="#g49" x="897" y="707"/>
<use href="#g42" x="906" y="707"/>
<use href="#g57" x="913" y="707"/>
<use href="#g4d" x="914" y="737"/>
<use href="#g65" x="922" y="737"/>
<use href="#g6e" x="929" y="737"/>
<use href="#g75" x="936" y="737"/>
<use href="#g50" x="13" y="591"/>
<use href="#g6b" x="20" y="591"/>
<use href="#g46" x="76" y="591"/>
<use href="#g72" x="83" y="591"/>
<use href="#g65" x="90" y="591"/>
<use href="#g71" x="97" y="591"/>
<use href="#g28" x="108" y="591"/>
<use href="#g4d" x="113" y="591"/>
<use href="#g48" x="121" y="591"/>
<use href="#g7a" x="128" y="591"/>
<use href="#g29" x="135" y="591"/>
<use href="#g41" x="265" y="591"/>
<use href="#g6d" x="272" y="591"/>
<use href="#g70" x="280" y="591"/>
<use href="#g6c" x="287" y="591"/>
<use href="#g69" x="291" y="591"/>
<use href="#g74" x="294" y="591"/>
<use href="#g75" x="301" y="591"/>
<use href="#g64" x="308" y="591"/>
<use href="#g65" x="315" y="591"/>
<use href="#g31" x="19" y="620"/>
<use href="#g31" x="176" y="620"/>
<use href="#g30" x="181" y="620"/>
<use href="#g32" x="189" y="620"/>
<use href="#g2212" x="237" y="620"/>
<use href="#g32" x="244" y="620"/>
<use href="#g30" x="251" y="620"/>
<use href="#g2e" x="259" y="620"/>
<use href="#g35" x="262" y="620"/>
<use href="#g32" x="269" y="620"/>
<use href="#g64" x="280" y="620"/>
<use href="#g42" x="287" y="620"/>
<use href="#g6d" x="294" y="620"/>
<use href="#g32" x="19" y="649"/>
<use href="#g33" x="176" y="649"/>
<use href="#g30" x="183" y="649"/>
<use href="#g32" x="191" y="649"/>
<use href="#g2212" x="239" y="649"/>
<use href="#g33" x="246" y="649"/>
<use href="#g31" x="253" y="649"/>
<use href="#g2e" x="258" y="649"/>
<use href="#g38" x="261" y="649"/>
<use href="#g37" x="268" y="649"/>
<use href="#g64" x="279" y="649"/>
<use href="#g42" x="286" y="649"/>
<use href="#g6d" x="293" y="649"/>
<use href="#g33" x="19" y="678"/>
<use href="#g35" x="176" y="678"/>
<use href="#g30" x="183" y="678"/>
<use href="#g31" x="191" y="678"/>
<use href="#g2212" x="239" y="678"/>
<use href="#g33" x="246" y="678"/>
<use href="#g37" x="253" y="678"/>
<use href="#g2e" x="260" y="678"/>
<use href="#g33" x="263" y="678"/>
<use href="#g33" x="270" y="678"/>
<use href="#g64" x="281" y="678"/>
<use href="#g42" x="288" y="678"/>
<use href="#g6d" x="295" y="678"/>
<use href="#g34" x="19" y="707"/>
<use href="#g37" x="176" y="707"/>
<use href="#g30" x="183" y="707"/>
<use href="#g30" x="191" y="707"/>
<use href="#g2212" x="231" y="707"/>
<use href="#g34" x="238" y="707"/>
<use href="#g30" x="246" y="707"/>
<use href="#g2e" x="254" y="707"/>
<use href="#g33" x="257" y="707"/>
<use href="#g33" x="264" y="707"/>
<use href="#g64" x="275" y="707"/>
<use href="#g42" x="282" y="707"/>
<use href="#g6d" x="289" y="707"/>
<use href="#g35" x="19" y="736"/>
<use href="#g39" x="176" y="736"/>
<use href="#g30" x="183" y="736"/>
<use href="#g30" x="191" y="736"/>
<use href="#g2212" x="231" y="736"/>
<use href="#g34" x="238" y="736"/>
<use href="#g33" x="246" y="736"/>
<use href="#g2e" x="253" y="736"/>
<use href="#g31" x="256" y="736"/>
<use href="#g31" x="261" y="736"/>
<use href="#g64" x="270" y="736"/>
<use href="#g42" x="277" y="736"/>
<use href="#g6d" x="284" y="736"/>
<use href="#g50" x="434" y="591"/>
<use href="#g6b" x="441" y="591"/>
<use href="#g46" x="498" y="591"/>
<use href="#g72" x="505" y="591"/>
<use href="#g65" x="512" y="591"/>
<use href="#g71" x="519" y="591"/>
<use href="#g28" x="530" y="591"/>
<use href="#g4d" x="535" y="591"/>
<use href="#g48" x="543" y="591"/>
<use href="#g7a" x="550" y="591"/>
<use href="#g29" x="557" y="591"/>
<use href="#g41" x="687" y="591"/>
<use href="#g6d" x="694" y="591"/>
<use href="#g70" x="702" y="591"/>
<use href="#g6c" x="709" y="591"/>
<use href="#g69" x="713" y="591"/>
<use href="#g74" x="716" y="591"/>
<use href="#g75" x="723" y="591"/>
<use href="#g64" x="730" y="591"/>
<use href="#g65" x="737" y="591"/>
<use href="#g36" x="443" y="620"/>
<use href="#g31" x="585" y="620"/>
<use href="#g30" x="590" y="620"/>
<use href="#g39" x="598" y="620"/>
<use href="#g36" x="605" y="620"/>
<use href="#g2212" x="661" y="620"/>
<use href="#g34" x="668" y="620"/>
<use href="#g38" x="676" y="620"/>
<use href="#g2e" x="683" y="620"/>
<use href="#g32" x="686" y="620"/>
<use href="#g35" x="693" y="620"/>
<use href="#g64" x="704" y="620"/>
<use href="#g42" x="711" y="620"/>
<use href="#g6d" x="718" y="620"/>
<use href="#g37" x="443" y="649"/>
<use href="#g35" x="600" y="649"/>
<use href="#g39" x="607" y="649"/>
<use href="#g39" x="614" y="649"/>
<use href="#g2212" x="679" y="649"/>
<use href="#g35" x="686" y="649"/>
<use href="#g33" x="693" y="649"/>
<use href="#g2e" x="700" y="649"/>
<use href="#g31" x="703" y="649"/>
<use href="#g34" x="708" y="649"/>
<use href="#g64" x="720" y="649"/>
<use href="#g42" x="727" y="649"/>
<use href="#g6d" x="734" y="649"/>
<use href="#g38" x="443" y="678"/>
<use href="#g32" x="600" y="678"/>
<use href="#g30" x="607" y="678"/>
<use href="#g33" x="615" y="678"/>
<use href="#g2212" x="663" y="678"/>
<use href="#g35" x="670" y="678"/>
<use href="#g33" x="677" y="678"/>
<use href="#g2e" x="684" y="678"/>
<use href="#g31" x="687" y="678"/>
<use href="#g35" x="692" y="678"/>
<use href="#g64" x="703" y="678"/>
<use href="#g42" x="710" y="678"/>
<use href="#g6d" x="717" y="678"/>
<use href="#g39" x="443" y="707"/>
<use href="#g34" x="600" y="707"/>
<use href="#g30" x="608" y="707"/>
<use href="#g30" x="617" y="707"/>
<use href="#g2212" x="656" y="707"/>
<use href="#g35" x="663" y="707"/>
<use href="#g33" x="670" y="707"/>
<use href="#g2e" x="677" y="707"/>
<use href="#g32" x="680" y="707"/>
<use href="#g32" x="687" y="707"/>
<use href="#g64" x="698" y="707"/>
<use href="#g42" x="705" y="707"/>
<use href="#g6d" x="712" y="707"/>
<use href="#g31" x="427" y="736"/>
<use href="#g30" x="432" y="736"/>
<use href="#g37" x="582" y="736"/>
<use href="#g39" x="589" y="736"/>
<use href="#g38" x="596" y="736"/>
<use href="#g2212" x="661" y="736"/>
<use href="#g35" x="668" y="736"/>
<use href="#g35" x="675" y="736"/>
<use href="#g2e" x="682" y="736"/>
<use href="#g32" x="685" y="736"/>
<use href="#g33" x="692" y="736"/>
<use href="#g64" x="703" y="736"/>
<use href="#g42" x="710" y="736"/>
<use href="#g6d" x="717" y="736"/>
<use href="#g53" x="11" y="771"/>
<use href="#g54" x="18" y="771"/>
<use href="#g41" x="25" y="771"/>
<use href="#g52" x="32" y="771"/>
<use href="#g54" x="39" y="771"/>
<use href="#g31" x="50" y="771"/>
<use href="#g30" x="55" y="771"/>
<use href="#g4d" x="79" y="771"/>
<use href="#g48" x="87" y="771"/>
<use href="#g7a" x="94" y="771"/>
<use href="#g53" x="628" y="771"/>
<use href="#g54" x="635" y="771"/>
<use href="#g4f" x="642" y="771"/>
<use href="#g50" x="649" y="771"/>
<use href="#g31" x="660" y="771"/>
<use href="#g2e" x="665" y="771"/>
<use href="#g32" x="668" y="771"/>
<use href="#g30" x="675" y="771"/>
<use href="#g30" x="684" y="771"/>
<use href="#g47" x="708" y="771"/>
<use href="#g48" x="715" y="771"/>
<use href="#g7a" x="722" y="771"/>
<use href="#g23" x="71" y="800"/>
<use href="#g52" x="79" y="800"/>
<use href="#g45" x="86" y="800"/>
<use href="#g53" x="93" y="800"/>
<use href="#g42" x="104" y="800"/>
<use href="#g57" x="111" y="800"/>
<use href="#g31" x="123" y="800"/>
<use href="#g30" x="128" y="800"/>
<use href="#g6b" x="152" y="800"/>
<use href="#g48" x="159" y="800"/>
<use href="#g7a" x="166" y="800"/>
<use href="#g56" x="402" y="800"/>
<use href="#g42" x="409" y="800"/>
<use href="#g57" x="416" y="800"/>
<use href="#g31" x="428" y="800"/>
<use href="#g30" x="434" y="800"/>
<use href="#g6b" x="457" y="800"/>
<use href="#g48" x="464" y="800"/>
<use href="#g7a" x="471" y="800"/>
<use href="#g53" x="662" y="800"/>
<use href="#g57" x="669" y="800"/>
<use href="#g50" x="677" y="800"/>
<use href="#g33" x="688" y="800"/>
<use href="#g35" x="695" y="800"/>
<use href="#g2e" x="702" y="800"/>
<use href="#g37" x="705" y="800"/>
<use href="#g73" x="820" y="800"/>
<use href="#g65" x="827" y="800"/>
<use href="#g63" x="834" y="800"/>
</g>
</svg>
</body></html>
